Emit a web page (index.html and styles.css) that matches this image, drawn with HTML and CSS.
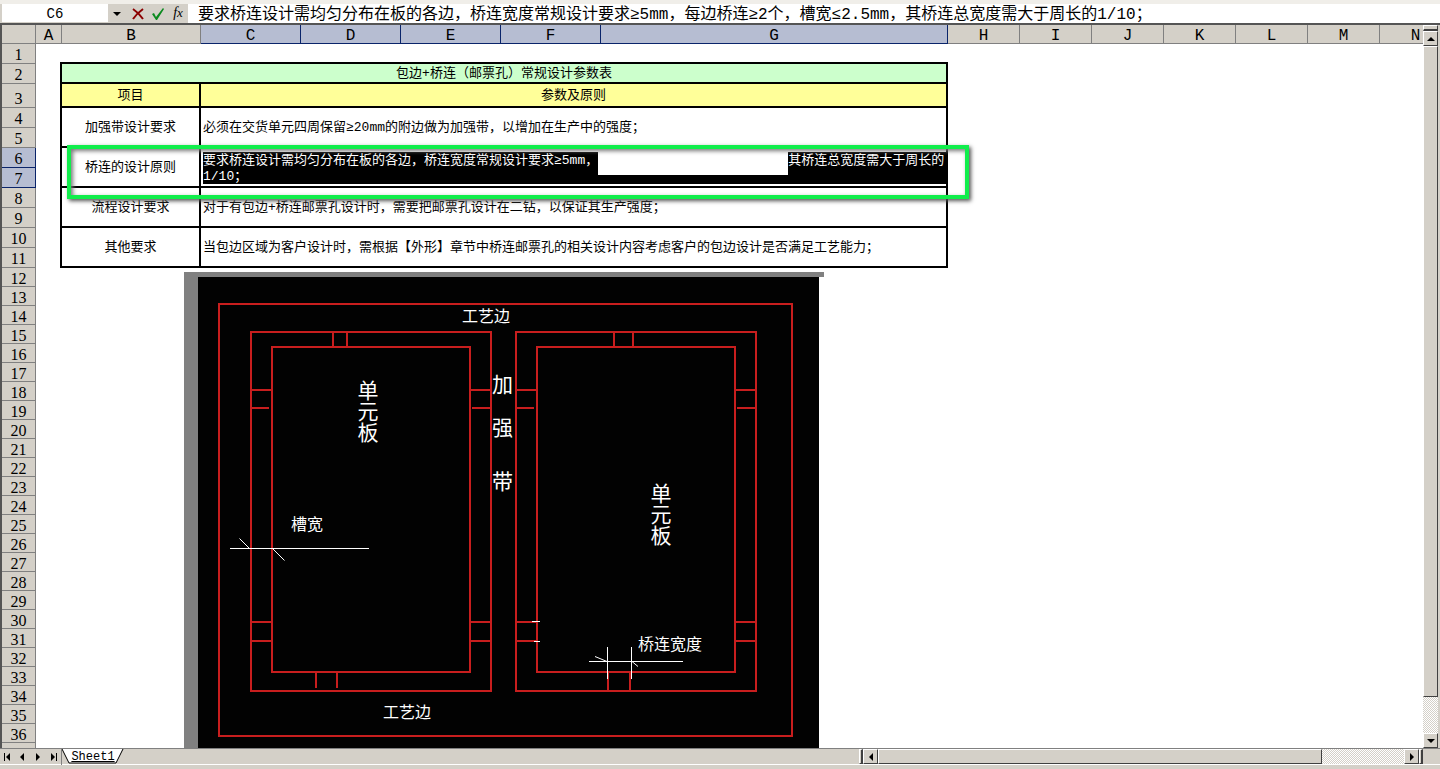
FILE: index.html
```html
<!DOCTYPE html>
<html lang="zh-CN">
<head>
    <meta charset="UTF-8">
    <meta name="viewport" content="width=device-width, initial-scale=1.0">
    <title>Sheet1</title>
    <link rel="stylesheet" href="styles.css">
</head>
<body>

    <div class="formula-bar">
        <input class="name-box" type="text" value="C6" aria-label="名称框">
        <button class="tool name-drop" type="button" aria-label="名称列表">
            <svg width="8" height="4" viewBox="0 0 8 4"><path d="M0 0h8L4 4z" fill="#000"/></svg>
        </button>
        <button class="tool" type="button" aria-label="取消">
            <svg width="12" height="12" viewBox="0 0 12 12"><path d="M1 1c3 2 7 6 10 10M11 1C7 4 3 8 1 11" fill="none" stroke="#8b0000" stroke-width="2"/></svg>
        </button>
        <button class="tool" type="button" aria-label="输入">
            <svg width="12" height="12" viewBox="0 0 12 12"><path d="M0 6l2-1 2 4L11 0l1 1-7 11H4z" fill="#0a8a1e"/></svg>
        </button>
        <button class="tool fx" type="button" aria-label="插入函数">f<span>x</span></button>
        <input class="formula" type="text" aria-label="编辑栏" value="要求桥连设计需均匀分布在板的各边，桥连宽度常规设计要求≥5mm，每边桥连≥2个，槽宽≤2.5mm，其桥连总宽度需大于周长的1/10；">
    </div>

    <main class="workbook">
        <div class="sheet">
            <div class="corner"></div>
            <div class="col-heads">
                <span class="col-a">A</span>
                <span class="col-b">B</span>
                <span class="col-c active">C</span>
                <span class="col-c active">D</span>
                <span class="col-c active">E</span>
                <span class="col-c active">F</span>
                <span class="col-g active">G</span>
                <span>H</span>
                <span>I</span>
                <span>J</span>
                <span>K</span>
                <span>L</span>
                <span>M</span>
                <span>N</span>
            </div>
            <div class="row-heads">
                <span class="mid">1</span>
                <span class="mid">2</span>
                <span class="tall">3</span>
                <span class="mid">4</span>
                <span class="mid">5</span>
                <span class="mid active">6</span>
                <span class="mid active">7</span>
                <span class="mid">8</span>
                <span class="mid">9</span>
                <span class="mid">10</span>
                <span class="mid">11</span>
                <span>12</span>
                <span>13</span>
                <span>14</span>
                <span>15</span>
                <span>16</span>
                <span>17</span>
                <span>18</span>
                <span>19</span>
                <span>20</span>
                <span>21</span>
                <span>22</span>
                <span>23</span>
                <span>24</span>
                <span>25</span>
                <span>26</span>
                <span>27</span>
                <span>28</span>
                <span>29</span>
                <span>30</span>
                <span>31</span>
                <span>32</span>
                <span>33</span>
                <span>34</span>
                <span>35</span>
                <span>36</span>
                <span></span>
            </div>

            <div class="cells">
                <table class="params">
                    <colgroup>
                        <col class="item-col">
                        <col>
                    </colgroup>
                    <thead>
                        <tr class="title"><th colspan="2">包边+桥连（邮票孔）常规设计参数表</th></tr>
                        <tr class="heads"><th>项目</th><th>参数及原则</th></tr>
                    </thead>
                    <tbody>
                        <tr>
                            <th>加强带设计要求</th>
                            <td>必须在交货单元四周保留≥20mm的附边做为加强带，以增加在生产中的强度；</td>
                        </tr>
                        <tr>
                            <th>桥连的设计原则</th>
                            <td class="editing">
                                <div class="selection">要求桥连设计需均匀分布在板的各边，桥连宽度常规设计要求≥5mm，<span class="blank"></span>其桥连总宽度需大于周长的1/10；</div>
                            </td>
                        </tr>
                        <tr>
                            <th>流程设计要求</th>
                            <td>对于有包边+桥连邮票孔设计时，需要把邮票孔设计在二钻，以保证其生产强度；</td>
                        </tr>
                        <tr>
                            <th>其他要求</th>
                            <td>当包边区域为客户设计时，需根据【外形】章节中桥连邮票孔的相关设计内容考虑客户的包边设计是否满足工艺能力；</td>
                        </tr>
                    </tbody>
                </table>
                <div class="highlight"></div>

                <svg class="drawing" width="640" height="476" viewBox="184 272 640 476">
                    <path d="M184 272h640v5H198v471h-14z" fill="#808080"/>
                    <rect x="198" y="277" width="621" height="471" fill="#020202"/>
                    <g fill="none" stroke="#c81e1e" stroke-width="2">
                        <rect x="219" y="304" width="573" height="432"/>
                        <!-- left board -->
                        <rect x="251" y="332" width="240" height="359"/>
                        <rect x="272" y="347" width="198" height="325"/>
                        <path d="M333 332v15M347 332v15M251 390h21M251 408h18M470 390h21M472 408h19M251 622h21M251 641h21M470 622h21M470 641h21M316 672v16M337 672v16"/>
                        <!-- right board -->
                        <rect x="516" y="332" width="240" height="359"/>
                        <rect x="537" y="347" width="198" height="325"/>
                        <path d="M614 332v15M633 332v15M516 390h21M516 408h18M735 390h21M737 408h19M516 622h21M516 641h21M735 622h21M735 641h21M608 672v20M630 672v20"/>
                    </g>
                    <!-- dimension lines -->
                    <path d="M230 548.5h139M239.500 538.500l10 10M272.500 548.500l12 12M589 661.500h94M607.500 647v32M631.500 647v32M595 656.500l12 5M632 661.500l6 5M532 621.500h8M534 641.500h6" fill="none" stroke="#fff"/>
                    <g class="label">
                        <text x="462" y="322">工艺边</text>
                        <text x="383" y="718">工艺边</text>
                        <text x="291" y="530">槽宽</text>
                        <text x="638" y="650">桥连宽度</text>
                    </g>
                    <g class="label large">
                        <text class="vertical" x="368" y="380">单元板</text>
                        <text class="vertical" x="661" y="483">单元板</text>
                        <text x="492" y="392">加</text>
                        <text x="492" y="435">强</text>
                        <text x="492" y="489">带</text>
                    </g>
                </svg>
            </div>
        </div>

        <div class="scroll-v">
            <div class="split-h"></div>
            <button class="arrow" type="button" aria-label="向上滚动"><svg width="8" height="4" viewBox="0 0 8 4"><path d="M4 0l4 4H0z"/></svg></button>
            <div class="thumb"></div>
            <div class="track"></div>
            <button class="arrow" type="button" aria-label="向下滚动"><svg width="8" height="4" viewBox="0 0 8 4"><path d="M0 0h8L4 4z"/></svg></button>
        </div>
    </main>

    <footer class="bottom">
        <div class="tab-nav">
            <button type="button" aria-label="第一张"><svg width="7" height="8" viewBox="0 0 7 8"><path d="M0 0h1v8H0zM6 0v8L2 4z"/></svg></button>
            <button type="button" aria-label="上一张"><svg width="7" height="8" viewBox="0 0 7 8"><path d="M5 0v8L1 4z"/></svg></button>
            <button type="button" aria-label="下一张"><svg width="7" height="8" viewBox="0 0 7 8"><path d="M1 0v8l4-4z"/></svg></button>
            <button type="button" aria-label="最后一张"><svg width="7" height="8" viewBox="0 0 7 8"><path d="M1 0v8l4-4zM6 0h1v8H6z"/></svg></button>
        </div>
        <button class="tab" type="button">
            <svg width="62" height="17" viewBox="0 0 62 17"><path d="M0 -1l7 15h47l7-15z" fill="#fff"/><path d="M0 0l7 14h47l7-14" fill="none" stroke="#000"/></svg>
            <span>Sheet1</span>
        </button>
        <div class="scroll-h">
            <div class="split-v"></div>
            <button class="arrow" type="button" aria-label="向左滚动"><svg width="4" height="8" viewBox="0 0 4 8"><path d="M4 0v8L0 4z"/></svg></button>
            <div class="thumb"></div>
            <div class="track"></div>
            <button class="arrow" type="button" aria-label="向右滚动"><svg width="4" height="8" viewBox="0 0 4 8"><path d="M0 0v8l4-4z"/></svg></button>
            <div class="split-v"></div>
        </div>
    </footer>

</body>
</html>
```

FILE: styles.css
```css
* {
    box-sizing: border-box;
}

body {
    margin: 0;
    height: 100vh;
    display: flex;
    flex-direction: column;
    overflow: hidden;
    background-color: #d4d0c8;
    color: #000;
    font-family: "Liberation Mono", "Noto Sans CJK SC", monospace;
    font-size: 13px;
}

button, input {
    margin: 0;
    padding: 0;
    border: none;
    border-radius: 0;
    font-family: inherit;
    color: inherit;
}

button {
    display: flex;
    align-items: center;
    justify-content: center;
    background: none;
}

/* formula bar */
.formula-bar {
    display: flex;
    height: 23px;
    padding: 4px 0 0 2px;
    background: linear-gradient(#f0eee9 4px, #d4d0c8 4px);
}

.name-box {
    width: 106px;
    height: 18px;
    padding-top: 2px;
    font-size: 14px;
    text-align: center;
    background-color: #fff;
}

.tool {
    width: 20px;
    height: 19px;
}

.name-drop {
    width: 17px;
    margin-right: 3px;
}

.fx {
    align-items: baseline;
    padding-top: 1px;
    font-family: "Liberation Serif", serif;
    font-style: italic;
    font-size: 14px;
}

.fx span {
    font-size: 13px;
}

.formula {
    flex: 1;
    height: 19px;
    padding: 0 0 3px 10px;
    font-size: 16px;
    background-color: #fff;
}

/* workbook window */
.workbook {
    flex: 1;
    min-height: 0;
    display: flex;
    padding-right: 2px;
    border-top: 2px solid #555;
    border-left: 2px solid #555;
}

.sheet {
    flex: 1;
    min-width: 0;
    display: grid;
    grid-template-columns: 34px 1fr;
    grid-template-rows: 19px 1fr;
    overflow: hidden;
    background-color: #fff;
}

.corner {
    background-color: #d4d0c8;
    border-right: 1px solid #808080;
    border-bottom: 1px solid #808080;
}

.col-heads {
    display: flex;
    overflow: hidden;
    font-size: 16px;
}

.col-heads span {
    flex: none;
    width: 72px;
    line-height: 23px;
    text-align: center;
    background-color: #d4d0c8;
    border-right: 1px solid #808080;
    border-bottom: 1px solid #808080;
}

.col-heads .col-a {
    width: 26px;
}

.col-heads .col-b {
    width: 139px;
}

.col-heads .col-c {
    width: 100px;
}

.col-heads .col-g {
    width: 347px;
}

.row-heads {
    display: flex;
    flex-direction: column;
    overflow: hidden;
    font-family: "Liberation Serif", serif;
    font-size: 16px;
}

.row-heads span {
    flex: none;
    height: 19px;
    line-height: 22px;
    text-align: center;
    background-color: #d4d0c8;
    border-right: 1px solid #808080;
    border-bottom: 1px solid #808080;
}

.row-heads .mid {
    height: 20px;
}

.row-heads .tall {
    height: 24px;
    line-height: 30px;
}

.col-heads .active, .row-heads .active {
    background-color: #b6bdd2;
    border-color: #0a246a;
}

.cells {
    position: relative;
    overflow: hidden;
}

/* parameter table */
.params {
    width: 888px;
    margin: 18px 0 0 24px;
    table-layout: fixed;
    border-collapse: collapse;
}

.item-col {
    width: 139px;
}

.params tr {
    height: 40px;
}

.params .title {
    height: 20px;
    background-color: #ccffcc;
}

.params .heads {
    height: 24px;
    background-color: #ffff99;
}

.params th, .params td {
    padding: 2px 2px 0;
    border: 2px solid #000;
    font-weight: normal;
    line-height: 16px;
}

.params .editing {
    padding: 4px 0 1px 2px;
    vertical-align: top;
}

.selection {
    height: 32px;
    padding-top: 1px;
    color: #fff;
    background-color: #000;
}

.blank {
    display: inline-block;
    width: 190px;
    height: 27px;
    margin: -5px 0 -6px;
    vertical-align: middle;
    background-color: #fff;
}

.highlight {
    position: absolute;
    left: 31px;
    top: 101px;
    width: 902px;
    height: 54px;
    border: 4px solid #11ee4c;
    box-shadow: 2px 2px 4px #555, inset 2px 2px 4px #777;
}

.drawing {
    display: block;
    margin: 4px 0 0 148px;
}

.label {
    font-family: "Noto Sans CJK SC", sans-serif;
    font-size: 16px;
    fill: #fff;
}

.large {
    font-size: 21px;
}

.vertical {
    writing-mode: vertical-rl;
}

/* scroll bars */
.scroll-v {
    width: 15px;
    display: flex;
    flex-direction: column;
}

.arrow, .thumb, .split-h, .split-v {
    background-color: #d4d0c8;
    border: 1px solid #fff;
    border-right-color: #404040;
    border-bottom-color: #404040;
}

.arrow {
    flex: none;
    width: 15px;
    height: 15px;
}

.track {
    flex: 1;
    background: repeating-conic-gradient(#fff 0 25%, #d4d0c8 0 50%) 0 0 / 2px 2px;
}

.split-h {
    height: 6px;
    border-bottom-width: 2px;
}

.scroll-v .thumb {
    flex: 18;
}

/* sheet tabs */
.bottom {
    display: flex;
    height: 21px;
    padding-right: 17px;
    border-top: 1px solid #808080;
    border-bottom: 4px solid #d4d0c8;
    box-shadow: inset 0 -1px #fff;
}

.tab-nav {
    display: flex;
    width: 62px;
    border-right: 1px solid #808080;
}

.tab-nav button {
    width: 16px;
}

.tab {
    position: relative;
    width: 62px;
    height: 16px;
    font-size: 12px;
}

.tab svg {
    position: absolute;
    left: 0;
    top: 0;
}

.tab span {
    position: relative;
    text-decoration: underline;
}

.scroll-h {
    display: flex;
    width: 564px;
    height: 15px;
    margin-left: auto;
}

.scroll-h .thumb {
    flex: 5.4;
}

.split-v {
    width: 4px;
    border-right-width: 2px;
}
```
